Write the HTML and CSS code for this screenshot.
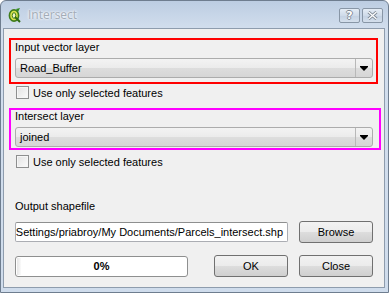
FILE: index.html
```html
<!DOCTYPE html>
<html lang="en">
<head>
    <meta charset="UTF-8">
    <title>Intersect</title>
    <link rel="stylesheet" href="styles.css">
</head>
<body>
    <div class="window">
        <div class="titlebar">
            <svg class="app-icon" width="13" height="15" viewBox="0 0 13 15">
                <ellipse cx="6" cy="7.5" rx="4.6" ry="5.6" fill="#d8e24a" stroke="#3f7d1c" stroke-width="1.6"/>
                <ellipse cx="6" cy="7.5" rx="1.8" ry="2.8" fill="#eef3c8" stroke="#3f7d1c" stroke-width="1"/>
                <path d="M7 9 L12 14" stroke="#2f6b12" stroke-width="2"/>
                <path d="M8 1 L12 0 L10 4 Z" fill="#2f8a1a"/>
            </svg>
            <span class="title">Intersect</span>
            <div class="caption-buttons">
                <span class="cap-btn">?</span>
                <span class="cap-btn">
                    <svg width="11" height="9" viewBox="0 0 11 9">
                        <path d="M1.5 1 L9.5 8 M9.5 1 L1.5 8" stroke="#7f8a96" stroke-width="3"/>
                        <path d="M1.5 1 L9.5 8 M9.5 1 L1.5 8" stroke="#fff" stroke-width="1.2"/>
                    </svg>
                </span>
            </div>
        </div>

        <div class="client">
            <div class="group group-input">
                <div class="label">Input vector layer</div>
                <div class="combo">
                    <span class="combo-text">Road_Buffer</span>
                    <span class="combo-arrow">
                        <svg width="8" height="5" viewBox="0 0 8 5"><path d="M0 0 H8 V1 L4 5 L0 1 Z" fill="#000"/></svg>
                    </span>
                </div>
            </div>
            <div class="check"><span class="box"></span>Use only selected features</div>

            <div class="group group-intersect">
                <div class="label">Intersect layer</div>
                <div class="combo">
                    <span class="combo-text">joined</span>
                    <span class="combo-arrow">
                        <svg width="8" height="5" viewBox="0 0 8 5"><path d="M0 0 H8 V1 L4 5 L0 1 Z" fill="#000"/></svg>
                    </span>
                </div>
            </div>
            <div class="check check-second"><span class="box"></span>Use only selected features</div>

            <div class="label output-label">Output shapefile</div>
            <div class="row file-row">
                <div class="line-edit"><span>Settings/priabroy/My Documents/Parcels_intersect.shp</span></div>
                <button class="btn">Browse</button>
            </div>

            <div class="row bottom-row">
                <div class="progress"><span class="progress-start"></span>0%</div>
                <button class="btn btn-ok">OK</button>
                <button class="btn">Close</button>
            </div>
        </div>
    </div>
</body>
</html>
```

FILE: styles.css
```css
body, html {
    margin: 0;
    background: #ffffff;
    font-family: "Liberation Sans", Tahoma, sans-serif;
    font-size: 11px;
    color: #000;
}

.window {
    width: 389px;
    height: 293px;
    box-sizing: border-box;
    border: 1px solid #6e7d8f;
    border-radius: 6px 6px 0 0;
    background: linear-gradient(#bccde2, #d2deed 28px, #cfdcec);
    padding: 0 3px 4px 2px;
    display: flex;
    flex-direction: column;
}

.titlebar {
    height: 27px;
    display: flex;
    align-items: center;
    padding-left: 5px;
}

.app-icon {
    margin-top: 1px;
}

.title {
    margin-left: 7px;
    font-family: "Open Sans", "Liberation Sans", sans-serif;
    font-size: 12px;
    color: #a3acb7;
    text-shadow: 0 0 3px #fff, 0 0 2px #fff;
}

.caption-buttons {
    margin-left: auto;
    margin-right: 2px;
    display: flex;
    gap: 2px;
    margin-top: 2px;
}

.cap-btn {
    width: 21px;
    height: 15px;
    box-sizing: border-box;
    border: 1px solid #8896a6;
    border-radius: 2px;
    background: linear-gradient(#e4ecf5, #cfdbe9 50%, #c3d1e2 51%, #d4dfec);
    display: flex;
    align-items: center;
    justify-content: center;
    font-family: "DejaVu Sans", sans-serif;
    font-weight: bold;
    font-size: 11px;
    color: #fff;
    text-shadow: 1px 0 #7f8a96, -1px 0 #7f8a96, 0 1px #7f8a96, 0 -1px #7f8a96;
}

.client {
    flex: 1;
    background: #f0f0f0;
    border: 1px solid #8e9cad;
    padding: 9px 0 0 5px;
}

.label {
    line-height: 14px;
}

.group {
    box-sizing: border-box;
    border: 2px solid #ff0000;
    padding: 0 3px 4px 4px;
}

.group-input {
    width: 369px;
}

.group-intersect {
    width: 372px;
    border-color: #ff00ff;
    padding-bottom: 1px;
    margin-top: 9px;
}

.group-intersect .label {
    line-height: 12px;
}

.combo {
    margin-top: 4px;
    width: 358px;
    height: 20px;
    box-sizing: border-box;
    border: 1px solid #acacac;
    border-radius: 3px;
    background: linear-gradient(#f3f3f3, #ebebeb 50%, #dddddd 51%, #d6d6d6);
    display: flex;
    align-items: center;
}

.group-intersect .combo {
    margin-top: 5px;
}

.combo-text {
    flex: 1;
    padding-left: 4px;
}

.combo-arrow {
    width: 16px;
    height: 100%;
    border-left: 1px solid #b8b8b8;
    display: flex;
    align-items: center;
    justify-content: center;
}

.check {
    margin: 2px 0 0 7px;
    height: 13px;
    display: flex;
    align-items: center;
    gap: 4px;
}

.check-second {
    margin-top: 5px;
}

.box {
    width: 13px;
    height: 13px;
    box-sizing: border-box;
    border: 1px solid #8e8f8f;
    background: linear-gradient(135deg, #e2e2e2, #fbfbfb);
    box-shadow: inset 0 0 0 1px #f6f6f6;
}

.output-label {
    margin: 31px 0 0 6px;
}

.row {
    display: flex;
    align-items: center;
    margin-left: 6px;
}

.file-row {
    margin-top: 8px;
    gap: 11px;
}

.line-edit {
    width: 273px;
    height: 20px;
    box-sizing: border-box;
    border: 1px solid #abadb3;
    border-top-color: #8e8f8f;
    border-radius: 2px;
    background: #fff;
    display: flex;
    align-items: center;
    justify-content: flex-end;
    overflow: hidden;
    padding-right: 4px;
    white-space: nowrap;
}

.btn {
    width: 74px;
    height: 22px;
    box-sizing: border-box;
    border: 1px solid #707070;
    border-radius: 3px;
    background: linear-gradient(#f2f2f2, #ebebeb 50%, #dddddd 51%, #cfcfcf);
    font: inherit;
    color: #000;
    padding: 0;
}

.bottom-row {
    margin-top: 12px;
    gap: 11px;
}

.progress {
    width: 173px;
    height: 21px;
    box-sizing: border-box;
    border: 1px solid #8e8f8f;
    border-radius: 3px;
    background: #fff;
    display: flex;
    align-items: center;
    justify-content: center;
    font-weight: bold;
    position: relative;
    margin-right: 15px;
}

.progress-start {
    position: absolute;
    left: 1px;
    top: 1px;
    bottom: 1px;
    width: 4px;
    background: linear-gradient(90deg, #e6e6e6, #fafafa);
}
```
